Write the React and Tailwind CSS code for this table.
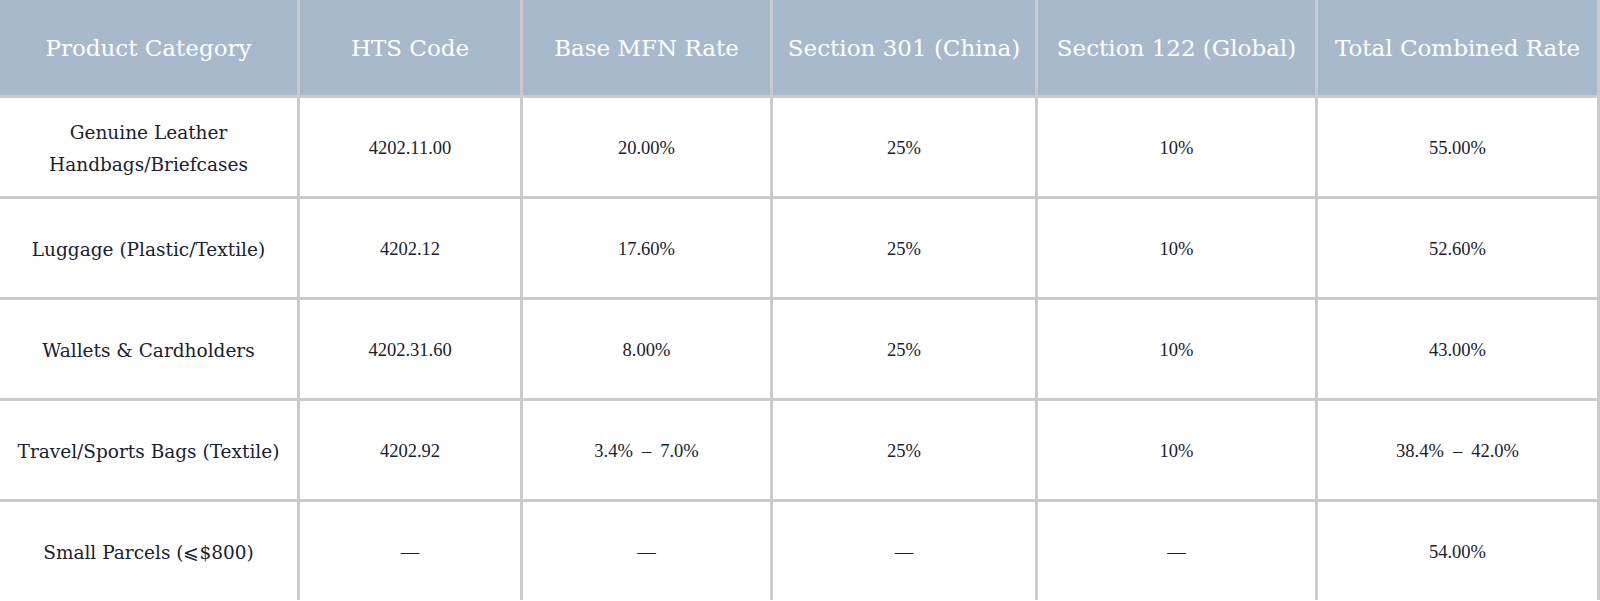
import React from "react";

const headers = [
  "Product Category",
  "HTS Code",
  "Base MFN Rate",
  "Section 301 (China)",
  "Section 122 (Global)",
  "Total Combined Rate",
];

const rows = [
  {
    category: ["Genuine Leather", "Handbags/Briefcases"],
    values: ["4202.11.00", "20.00%", "25%", "10%", "55.00%"],
  },
  {
    category: ["Luggage (Plastic/Textile)"],
    values: ["4202.12", "17.60%", "25%", "10%", "52.60%"],
  },
  {
    category: ["Wallets & Cardholders"],
    values: ["4202.31.60", "8.00%", "25%", "10%", "43.00%"],
  },
  {
    category: ["Travel/Sports Bags (Textile)"],
    values: ["4202.92", ["3.4%", "7.0%"], "25%", "10%", ["38.4%", "42.0%"]],
  },
  {
    category: ["Small Parcels (\u2a7d$800)"],
    values: ["—", "—", "—", "—", "54.00%"],
  },
];

// ranges get a roomier dash, like the source table
function Cell({ value }) {
  if (Array.isArray(value)) {
    return (
      <span>
        {value[0]}
        <span className="mx-[9px]">–</span>
        {value[1]}
      </span>
    );
  }
  return <span>{value}</span>;
}

export default function App() {
  return (
    <div className="w-[1600px] h-[601px] overflow-hidden bg-white font-['Liberation_Serif','DejaVu_Serif',serif]">
      <div className="grid grid-cols-[297px_220px_247px_262px_277px_279px] auto-rows-[98px] grid-rows-[95px] gap-[3px] pr-[3px] bg-[#cbcbcb]">
        {headers.map((h) => (
          <div
            key={h}
            className="bg-[#a9b9cc] text-white text-[23px] font-['DejaVu_Serif',serif] flex items-center justify-center text-center pt-[2px]"
          >
            {h}
          </div>
        ))}

        {rows.map((row, i) => (
          <React.Fragment key={i}>
            <div className="bg-white text-[#18212f] text-[18.5px] leading-[32px] font-['DejaVu_Serif',serif] flex flex-col items-center justify-center text-center pt-[3px]">
              {row.category.map((line) => (
                <span key={line}>{line}</span>
              ))}
            </div>
            {row.values.map((v, j) => (
              <div
                key={j}
                className="bg-white text-[#18212f] text-[18.5px] flex items-center justify-center text-center pt-[4px]"
              >
                <Cell value={v} />
              </div>
            ))}
          </React.Fragment>
        ))}
      </div>
    </div>
  );
}
